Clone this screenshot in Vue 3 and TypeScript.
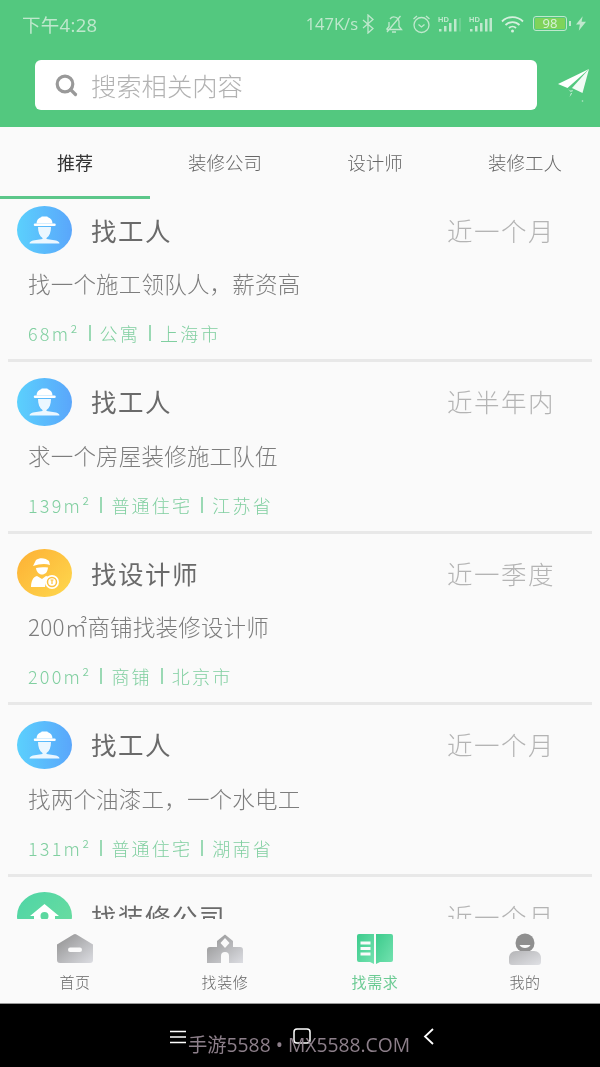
<script setup lang="ts">
interface Need {
  kind: 'worker' | 'designer' | 'company'
  title: string
  time: string
  body: string
  area: string
  type: string
  place: string
}

const tabs: string[] = ['推荐', '装修公司', '设计师', '装修工人']

const needs: Need[] = [
  { kind: 'worker', title: '找工人', time: '近一个月', body: '找一个施工领队人，薪资高', area: '68m²', type: '公寓', place: '上海市' },
  { kind: 'worker', title: '找工人', time: '近半年内', body: '求一个房屋装修施工队伍', area: '139m²', type: '普通住宅', place: '江苏省' },
  { kind: 'designer', title: '找设计师', time: '近一季度', body: '200㎡商铺找装修设计师', area: '200m²', type: '商铺', place: '北京市' },
  { kind: 'worker', title: '找工人', time: '近一个月', body: '找两个油漆工，一个水电工', area: '131m²', type: '普通住宅', place: '湖南省' },
  { kind: 'company', title: '找装修公司', time: '近一个月', body: '', area: '', type: '', place: '' },
]

const navs = [
  { key: 'home', label: '首页', active: false },
  { key: 'deco', label: '找装修', active: false },
  { key: 'need', label: '找需求', active: true },
  { key: 'mine', label: '我的', active: false },
]
</script>

<template>
  <div class="phone">
    <header class="head">
      <div class="status">
        <span class="clock">下午4:28</span>
        <div class="status-right">
          <span class="speed">147K/s</span>
          <svg width="13" height="20" viewBox="0 0 13 20" fill="none" stroke="#bfe8cd" stroke-width="1.300"><path d="M1 6l10 8.500-5 4.500V1l5 4.500-10 8.500" /></svg>
          <svg class="gap-b" width="18" height="20" viewBox="0 0 18 20" fill="none" stroke="#bfe8cd" stroke-width="1.300"><path d="M1.500 15.500h15l-2.500-3V8a5 5 0 0 0-9-3M4 8v4.500l-2.500 3M7 18h4M2 18L15.500 2" /></svg>
          <svg class="gap-c" width="19" height="20" viewBox="0 0 19 20" fill="none" stroke="#bfe8cd" stroke-width="1.300"><circle cx="9.500" cy="11" r="7.500" /><path d="M6.500 10.500l3 2.500 3-2.500M1.500 5L5 2M17.500 5L14 2" /></svg>
          <svg class="gap-d" width="24" height="18" viewBox="0 0 24 18" fill="#bfe8cd"><text x="0" y="6.500" font-size="7.500" font-family="Liberation Sans, sans-serif" font-weight="700">HD</text><rect x="1" y="14" width="2.500" height="2.500" /><rect x="6" y="11" width="2.500" height="5.500" /><rect x="11" y="8" width="2.500" height="8.500" /><rect x="16" y="4" width="2.500" height="12.500" /><rect x="21.500" y="3" width="1" height="13.500" opacity=".5" /></svg>
          <svg class="gap-d" width="23" height="18" viewBox="0 0 23 18" fill="#bfe8cd"><text x="0" y="6.500" font-size="7.500" font-family="Liberation Sans, sans-serif" font-weight="700">HD</text><rect x="1" y="14" width="2.500" height="2.500" /><rect x="6" y="11" width="2.500" height="5.500" /><rect x="11" y="8" width="2.500" height="8.500" /><rect x="16" y="4" width="2.500" height="12.500" /><rect x="20.500" y="3" width="2.500" height="13.500" /></svg>
          <svg class="gap-e" width="24" height="18" viewBox="0 0 24 18" fill="none" stroke="#d5f0de" stroke-width="1.800"><path d="M1 6.500a15 15 0 0 1 21 0M4.500 10a10 10 0 0 1 14 0M8 13a5 5 0 0 1 7 0" /><circle cx="11.500" cy="16" r="1.500" fill="#d5f0de" stroke="none" /></svg>
          <div class="battery"><span class="level">98</span></div>
          <span class="nub"></span>
          <svg class="bolt" width="10" height="15" viewBox="0 0 9 13" fill="#bfe8cd"><path d="M6 0L0 7.500h3.500L2.500 13 9 5H5z" /></svg>
        </div>
      </div>
      <div class="search-row">
        <div class="search">
          <svg width="24" height="24" viewBox="0 0 24 24" fill="none" stroke="#999" stroke-width="3.200"><circle cx="11" cy="11" r="7.800" /><path d="M16.500 16.500l5 5" stroke-linecap="round" /></svg>
          <span class="placeholder">搜索相关内容</span>
        </div>
        <svg class="send" width="34" height="34" viewBox="0 0 34 34" fill="#fff">
          <path d="M33 1L2 16l9.500 4z" />
          <path d="M33 1L16 20l10.500 5z" opacity=".92" />
          <path d="M12 21l2 1.500 3-.5-.5 1.500-2 .5z" opacity=".55" />
          <path d="M15 25l-1.500 4 2.500-3.500z" opacity=".85" />
          <circle cx="26.500" cy="33" r="0.800" opacity=".6" />
        </svg>
      </div>
    </header>

    <nav class="tabs">
      <div v-for="(t, i) in tabs" :key="t" class="tab" :class="{ on: i === 0 }">{{ t }}</div>
    </nav>

    <main class="list">
      <article v-for="(n, i) in needs" :key="i" class="card">
        <div class="top">
          <div class="avatar" :class="n.kind">
            <svg v-if="n.kind === 'worker'" width="55" height="48" viewBox="0 0 55 48" fill="#fff">
              <path d="M19.500 17.500c0-3.500 2-5.500 5-6.500v-.500h6v.500c3 1 5 3 5 6.500z" />
              <path d="M18 17.500h19.500a1 1 0 0 1 0 2.500H18a1 1 0 0 1 0-2.500z" />
              <path d="M21 21h13c0 5-1.500 9-4.500 11v1l9.500 1.500c2 .5 3.500 1.500 3.500 3H12.500c0-1.500 1.500-2.500 3.500-3l9.500-1.500v-1c-3-2-4.500-6-4.500-11z" opacity=".88" />
            </svg>
            <svg v-else-if="n.kind === 'designer'" width="55" height="48" viewBox="0 0 55 48" fill="#fff">
              <path d="M16 17l3-6c4-3 10-2 13 1l1 4c-5-2-11-1-17 1z" />
              <path d="M19 19c4-1 8-1 12-.5-.5 5-3 7-6 7s-5.500-2.500-6-6.500z" />
              <path d="M20 27l5 3 4-3c2 .5 4 1 5 2-4 2-6 5-6 9H14c0-6 2-10 6-11z" />
              <circle cx="35" cy="33" r="7" fill="#fff" />
              <circle cx="35" cy="33" r="4.500" fill="none" stroke="#fdc13f" stroke-width="1.500" />
              <path d="M33.500 31h3M35 31v4" stroke="#fdc13f" stroke-width="1.200" />
            </svg>
            <svg v-else width="55" height="48" viewBox="0 0 55 48" fill="#fff">
              <path d="M27.500 12L13 24h4v12h21V24h4z" />
              <circle cx="27.500" cy="24" r="4" fill="#5cd8a0" />
            </svg>
          </div>
          <h3 class="title">{{ n.title }}</h3>
          <span class="time">{{ n.time }}</span>
        </div>
        <p class="body">{{ n.body }}</p>
        <div class="meta">
          <span>{{ n.area }}</span><i></i><span>{{ n.type }}</span><i></i><span>{{ n.place }}</span>
        </div>
      </article>
    </main>

    <footer class="tabbar">
      <div v-for="n in navs" :key="n.key" class="nav" :class="{ on: n.active }">
        <svg width="40" height="34" viewBox="0 0 40 34">
          <defs>
            <linearGradient id="grey" x1="0" y1="0" x2="1" y2="1"><stop offset="0" stop-color="#8f8f8f" /><stop offset="1" stop-color="#dcdde2" /></linearGradient>
            <linearGradient id="body" x1="0" y1="0" x2="1" y2="1"><stop offset="0" stop-color="#b4b4b6" /><stop offset="1" stop-color="#e0e1e5" /></linearGradient>
            <linearGradient id="teal" x1="0" y1="0" x2="1" y2="1"><stop offset="0" stop-color="#3ccb8c" /><stop offset="1" stop-color="#74e2b0" /></linearGradient>
          </defs>
          <template v-if="n.key === 'home'">
            <path d="M2 11.500L18.500 1.500a3 3 0 0 1 3 0L38 11.500V27a3 3 0 0 1-3 3H5a3 3 0 0 1-3-3z" fill="url(#grey)" />
            <rect x="13" y="14.500" width="14" height="4.500" rx="2.200" fill="#fafafa" />
          </template>
          <template v-else-if="n.key === 'deco'">
            <path d="M12 8l8-6.500L28 8v6h7a3 3 0 0 1 3 3v13H2V17a3 3 0 0 1 3-3h7z" fill="url(#grey)" />
            <path d="M20 5l4.500 5-4.500 5-4.500-5z" fill="#fafafa" />
            <path d="M16 30v-7a4 4 0 0 1 8 0v7z" fill="#fafafa" />
          </template>
          <template v-else-if="n.key === 'need'">
            <path d="M2 3a2 2 0 0 1 2-2h15v30l-4-2H4a2 2 0 0 1-2-2z" fill="url(#teal)" />
            <path d="M21 1h15a2 2 0 0 1 2 2v24a2 2 0 0 1-2 2H25l-4 2z" fill="url(#teal)" />
            <path d="M5.500 8.500h10v3h-10zM5.500 14h10v3h-10zM5.500 19.500h10v3h-10z" fill="#fafafa" />
          </template>
          <template v-else>
            <circle cx="20" cy="10" r="9.500" fill="#8f8f8f" />
            <path d="M14.500 12c2 4 9 4 11 0z" fill="#fafafa" />
            <path d="M4 29v-4c0-4 3-7 7-7h18c4 0 7 3 7 7v4a3 3 0 0 1-3 3H7a3 3 0 0 1-3-3z" fill="url(#body)" />
          </template>
        </svg>
        <span class="nav-label">{{ n.label }}</span>
      </div>
    </footer>

    <div class="sysbar">
      <svg width="16" height="14" viewBox="0 0 16 14" stroke="#fff" stroke-width="1.500"><path d="M0 1.500h16M0 7h16M0 12.500h16" /></svg>
      <svg width="18" height="18" viewBox="0 0 18 18" fill="none" stroke="#fff" stroke-width="1.500"><rect x="1" y="1" width="16" height="14" rx="3" /></svg>
      <svg width="11" height="18" viewBox="0 0 11 18" fill="none" stroke="#fff" stroke-width="1.800"><path d="M10 1L2 8.500l8 7.500" /></svg>
      <span class="mark">手游5588 • MX5588.COM</span>
    </div>
  </div>
</template>

<style scoped>
.phone {
  position: relative;
  width: 600px;
  height: 1067px;
  display: flex;
  flex-direction: column;
  overflow: hidden;
  background: #fafafa;
  font-family: "Noto Sans CJK SC", "Noto Sans", sans-serif;
  filter: blur(0.45px);
}
.head {
  height: 127px;
  flex: none;
  background: #53c87f;
  display: flex;
  flex-direction: column;
}
.status {
  height: 47px;
  flex: none;
  padding: 0 14px 0 22px;
  display: flex;
  align-items: center;
  justify-content: space-between;
  color: #bfe8cd;
}
.clock {
  font-family: "Open Sans", "Noto Sans CJK SC", sans-serif;
  font-size: 18.500px;
  letter-spacing: 0.300px;
}
.status-right {
  display: flex;
  align-items: center;
}
.speed {
  font-family: "Open Sans", sans-serif;
  font-size: 16.500px;
  margin-right: 4px;
}
.gap-b { margin-left: 10px; }
.gap-c { margin-left: 9px; }
.gap-d { margin-left: 7px; }
.gap-e { margin-left: 9px; }
.battery {
  margin-left: 8px;
  width: 34px;
  height: 15px;
  box-sizing: border-box;
  border: 1.500px solid #bfe8cd;
  border-radius: 3px;
  padding: 1px;
  display: flex;
}
.level {
  flex: 1;
  background: #7fd35a;
  border-radius: 1px;
  color: #d7f2dc;
  font-family: "Open Sans", sans-serif;
  font-size: 13px;
  line-height: 11px;
  text-align: center;
}
.nub {
  width: 2px;
  height: 5px;
  margin-left: 2px;
  background: #bfe8cd;
}
.bolt { margin-left: 5px; }
.search-row {
  flex: 1;
  padding: 13px 10px 17px 35px;
  display: flex;
  align-items: center;
  justify-content: space-between;
}
.search {
  width: 502px;
  height: 50px;
  box-sizing: border-box;
  padding-left: 19px;
  background: #fff;
  border-radius: 6px;
  display: flex;
  align-items: center;
  gap: 14px;
}
.placeholder {
  margin-left: -1px;
  font-size: 25.300px;
  font-weight: 300;
  color: #b2b2b2;
}
.tabs {
  height: 72px;
  flex: none;
  display: grid;
  grid-template-columns: repeat(4, 150px);
  background: #fafafa;
}
.tab {
  display: flex;
  align-items: center;
  justify-content: center;
  box-sizing: border-box;
  padding-top: 1px;
  font-size: 18.500px;
  font-weight: 300;
  color: #666;
  border-bottom: 3px solid transparent;
}
.tab.on {
  color: #333;
  font-size: 18px;
  font-weight: 400;
  border-bottom-color: #5cc78a;
}
.list {
  flex: 1;
  min-height: 0;
  overflow: hidden;
}
.card {
  box-sizing: border-box;
  height: 171.500px;
  margin: 0 8px;
  padding: 15.500px 0 0 9px;
  border-bottom: 3px solid #e8e8e8;
}
.card:first-child {
  margin-top: -8.500px;
}
.top {
  display: flex;
  align-items: center;
  height: 48px;
}
.avatar {
  width: 55px;
  height: 48px;
  flex: none;
  border-radius: 50%;
  overflow: hidden;
}
.avatar svg {
  display: block;
}
.avatar.worker { background: linear-gradient(90deg, #5bd0fd, #5aa6fb); }
.avatar.designer { background: linear-gradient(135deg, #fdb034, #fed84e); }
.avatar.company { background: linear-gradient(135deg, #4ed5a6, #6edd9f); }
.title {
  flex: 1;
  margin: 0 0 2px 19px;
  font-size: 25.500px;
  font-weight: 400;
  letter-spacing: 1.500px;
  color: #6a6a6a;
}
.time {
  margin: 0 37px 2px 0;
  font-size: 25.500px;
  font-weight: 300;
  letter-spacing: 1.500px;
  color: #b4b4b4;
}
.body {
  margin: 11px 0 0 11px;
  height: 36px;
  line-height: 36px;
  font-size: 22.500px;
  font-weight: 300;
  letter-spacing: 0.200px;
  color: #7d7d7d;
}
.meta {
  margin: 19px 0 0 11px;
  display: flex;
  align-items: center;
  font-size: 18px;
  line-height: 26px;
  font-weight: 300;
  letter-spacing: 2.200px;
  color: #80cfa0;
}
.meta i {
  width: 2px;
  height: 16px;
  margin: 0 9px;
  background: #9ad9b4;
}
.tabbar {
  height: 84px;
  flex: none;
  display: grid;
  grid-template-columns: repeat(4, 150px);
  background: #fafafa;
  position: relative;
}
.nav {
  display: flex;
  flex-direction: column;
  align-items: center;
  padding-top: 14px;
}
.nav-label {
  margin-top: 5px;
  font-size: 15px;
  line-height: 20px;
  letter-spacing: 0.600px;
  font-weight: 300;
  color: #666;
}
.nav.on .nav-label {
  color: #6ccb94;
  font-weight: 400;
}
.sysbar {
  position: relative;
  height: 64px;
  flex: none;
  background: #000;
  border-top: 1px solid #999;
  box-sizing: border-box;
}
.sysbar svg {
  position: absolute;
  top: 24px;
}
.sysbar svg:nth-child(1) { left: 170px; top: 26px; }
.sysbar svg:nth-child(2) { left: 293px; top: 24px; }
.sysbar svg:nth-child(3) { left: 423px; top: 24px; }
.mark {
  position: absolute;
  left: 188px;
  top: 27px;
  font-family: "Open Sans", "Noto Sans CJK SC", sans-serif;
  font-size: 19.300px;
  line-height: 28px;
  color: #8d7f8a;
  white-space: nowrap;
}
</style>
